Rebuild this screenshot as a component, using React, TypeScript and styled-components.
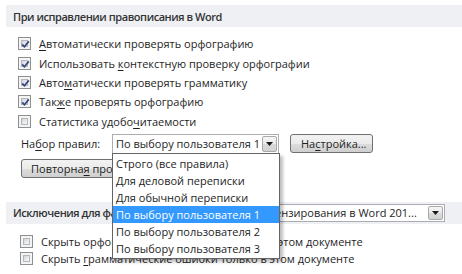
import React from "react";
import styled, { createGlobalStyle } from "styled-components";

const Global = createGlobalStyle`
  html, body { margin: 0; padding: 0; background: #ffffff; }
  body {
    font-family: "Open Sans", "Noto Sans", sans-serif;
    font-size: 11px;
    color: #1e1e1e;
  }
`;

const Page = styled.div`
  position: relative;
  width: 462px;
  height: 274px;
  overflow: hidden;
  box-sizing: border-box;
  padding: 5px 0 0 6px;
`;

const SectionHeader = styled.div`
  height: 22px;
  background: #eef0f4;
  display: flex;
  align-items: center;
  padding-left: 7px;
  font-weight: 600;
  font-size: 11px;
  color: #333333;
  white-space: nowrap;
`;

const HeaderLabel = styled.span`
  flex: none;
  letter-spacing: -0.45px;
`;

const OptionList = styled.div<{ $indent: number; $top: number }>`
  display: flex;
  flex-direction: column;
  padding-left: ${(p) => p.$indent}px;
  margin-top: ${(p) => p.$top}px;
`;

const OptionRow = styled.div<{ $h: number }>`
  height: ${(p) => p.$h}px;
  display: flex;
  align-items: center;
  gap: 8px;
  white-space: nowrap;
`;

const Box = styled.span`
  position: relative;
  flex: none;
  width: 13px;
  height: 13px;
  box-sizing: border-box;
  border: 1px solid #8e8f8f;
  background: #f4f4f4;
  padding: 2px;
  display: flex;
`;

const BoxInner = styled.span`
  flex: 1;
  box-sizing: border-box;
  border: 1px solid #b4b8be;
  background: linear-gradient(135deg, #cfd3d9 0%, #eef0f2 70%, #f8f8f8 100%);
`;

const Mark = styled.svg`
  position: absolute;
  left: 0;
  top: 0;
`;

const U = styled.span`
  text-decoration: underline;
  text-underline-offset: 2px;
`;

const RuleRow = styled.div`
  display: flex;
  align-items: center;
  margin-top: 3px;
  padding-left: 15px;
  height: 20px;
`;

const RuleLabel = styled.span`
  width: 91px;
  flex: none;
`;

const Combo = styled.div<{ $w?: number; $h: number }>`
  position: relative;
  flex: ${(p) => (p.$w ? "none" : "1")};
  min-width: 0;
  width: ${(p) => (p.$w ? `${p.$w}px` : "auto")};
  height: ${(p) => p.$h}px;
  box-sizing: border-box;
  border: 1px solid #abadb3;
  background: #ffffff;
  display: flex;
  align-items: center;
  font-weight: 400;
  font-size: 11px;
  color: #1e1e1e;
`;

const ComboText = styled.span`
  flex: 1;
  min-width: 0;
  padding-left: 3px;
  white-space: nowrap;
  overflow: hidden;
`;

const ComboArrow = styled.span`
  flex: none;
  width: 15px;
  height: calc(100% - 2px);
  margin-right: 1px;
  box-sizing: border-box;
  border: 1px solid #a9a9a9;
  border-radius: 2px;
  background: linear-gradient(#f6f6f6 0%, #e8e8e8 50%, #dadada 51%, #d2d2d2 100%);
  display: flex;
  align-items: center;
  justify-content: center;
`;

const Button = styled.div<{ $w: number }>`
  flex: none;
  width: ${(p) => p.$w}px;
  height: 19px;
  box-sizing: border-box;
  border: 1px solid #707070;
  border-radius: 3px;
  background: linear-gradient(#f2f2f2 0%, #ebebeb 50%, #dddddd 51%, #cfcfcf 100%);
  display: flex;
  align-items: center;
  padding-left: 9px;
  white-space: pre;
  overflow: hidden;
  color: #1e1e1e;
`;

const SettingsButton = styled(Button)`
  margin-left: 11px;
  padding-left: 10px;
`;

const RecheckRow = styled.div`
  margin-top: 5px;
  padding-left: 15px;
`;

const Section2 = styled(SectionHeader)`
  margin-top: 24px;
  padding-right: 17px;
  gap: 6px;
`;

const DropList = styled.div`
  position: absolute;
  left: -1px;
  top: 100%;
  width: 168px;
  box-sizing: border-box;
  border: 1px solid #646464;
  background: #ffffff;
  padding: 1px 0;
  box-shadow: 3px 3px 3px rgba(0, 0, 0, 0.25);
  z-index: 5;
`;

const DropItem = styled.div<{ $active?: boolean }>`
  height: 17px;
  display: flex;
  align-items: center;
  padding-left: 3px;
  white-space: nowrap;
  background: ${(p) => (p.$active ? "#3399ff" : "transparent")};
  color: ${(p) => (p.$active ? "#ffffff" : "#1e1e1e")};
`;

const Arrow = () => (
  <svg width="7" height="4" viewBox="0 0 7 4">
    <polygon points="0,0 7,0 3.5,4" fill="#1a1a1a" />
  </svg>
);

const Check = ({ checked }: { checked: boolean }) => (
  <Box>
    <BoxInner />
    {checked && (
      <Mark width="13" height="13" viewBox="0 0 13 13">
        <path d="M3.2 6.4 L5.4 8.8 L9.8 3.4" fill="none" stroke="#33467a" strokeWidth="1.7" />
      </Mark>
    )}
  </Box>
);

const Option = ({ checked, h, children }: { checked: boolean; h: number; children: React.ReactNode }) => (
  <OptionRow $h={h}>
    <Check checked={checked} />
    <span>{children}</span>
  </OptionRow>
);

const rules = [
  "Строго (все правила)",
  "Для деловой переписки",
  "Для обычной переписки",
  "По выбору пользователя 1",
  "По выбору пользователя 2",
  "По выбору пользователя 3",
];

export default function App() {
  return (
    <>
      <Global />
      <Page>
        <SectionHeader>
          <HeaderLabel>При исправлении правописания в Word</HeaderLabel>
        </SectionHeader>
        <OptionList $indent={12} $top={7}>
          <Option checked h={19.35}>
            <U>А</U>втоматически проверять орфографию
          </Option>
          <Option checked h={19.35}>
            Использовать <U>к</U>онтекстную проверку орфографии
          </Option>
          <Option checked h={19.35}>
            Авто<U>м</U>атически проверять грамматику
          </Option>
          <Option checked h={19.35}>
            Так<U>ж</U>е проверять орфографию
          </Option>
          <Option checked={false} h={19.35}>
            Статистика удобо<U>ч</U>итаемости
          </Option>
        </OptionList>
        <RuleRow>
          <RuleLabel>
            На<U>б</U>ор правил:
          </RuleLabel>
          <Combo $w={167} $h={20}>
            <ComboText>По выбору пользователя 1</ComboText>
            <ComboArrow>
              <Arrow />
            </ComboArrow>
            <DropList>
              {rules.map((r, i) => (
                <DropItem key={r} $active={i === 3}>
                  {r}
                </DropItem>
              ))}
            </DropList>
          </Combo>
          <SettingsButton $w={83}>
            На<U>с</U>тройка...
          </SettingsButton>
        </RuleRow>
        <RecheckRow>
          <Button $w={170}>
            Повторна<U>я</U> проверка
          </Button>
        </RecheckRow>
        <Section2>
          <HeaderLabel>Исключения для файла:</HeaderLabel>
          <Combo $h={18}>
            <ComboText>Методика правки и рецензирования в Word 201...</ComboText>
            <ComboArrow>
              <Arrow />
            </ComboArrow>
          </Combo>
        </Section2>
        <OptionList $indent={14} $top={9}>
          <Option checked={false} h={17}>
            Скрыть орфографические ошибки только в этом документе
          </Option>
          <Option checked={false} h={17}>
            Скрыть <U>г</U>рамматические ошибки только в этом документе
          </Option>
        </OptionList>
      </Page>
    </>
  );
}
